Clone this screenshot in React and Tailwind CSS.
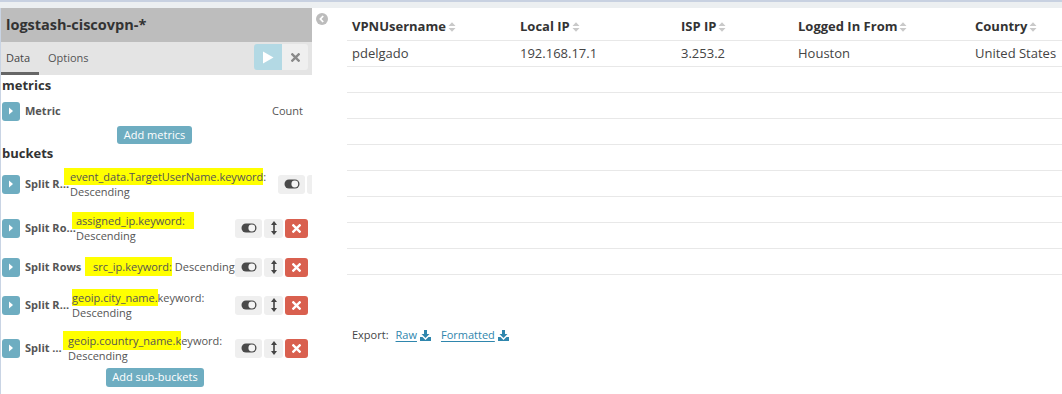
import React from 'react';

const FONT = { fontFamily: '"Open Sans", "Liberation Sans", sans-serif' };

const SortIcon = () => (
  <svg width="8" height="12" viewBox="0 0 8 12" className="ml-[2px] mb-[3px]">
    <path d="M0.5 5 L4 1.2 L7.5 5 Z M0.5 7 L4 10.8 L7.5 7 Z" fill="#c9c9c9" />
  </svg>
);

const Caret = () => (
  <svg width="6" height="8" viewBox="0 0 6 8">
    <path d="M1 0.5 L5 4 L1 7.5 Z" fill="#fff" />
  </svg>
);

const ToggleIcon = () => (
  <svg width="16" height="10" viewBox="0 0 16 10">
    <rect x="0.5" y="0.5" width="15" height="9" rx="4.5" fill="#4a4a4a" />
    <circle cx="10.8" cy="5" r="3.4" fill="#f4f4f4" />
  </svg>
);

const ArrowsIcon = () => (
  <svg width="6" height="14" viewBox="0 0 6 14">
    <path d="M3 0 L6 4 L0 4 Z M3 14 L6 10 L0 10 Z" fill="#444" />
    <rect x="2.2" y="3" width="1.6" height="8" fill="#444" />
  </svg>
);

const CrossIcon = ({ color = '#fff', size = 9 }) => (
  <svg width={size} height={size} viewBox="0 0 10 10">
    <path d="M1.5 1.5 L8.5 8.5 M8.5 1.5 L1.5 8.5" stroke={color} strokeWidth="2.6" strokeLinecap="square" />
  </svg>
);

const DownloadIcon = () => (
  <svg width="11" height="11" viewBox="0 0 11 11" className="ml-[3px]">
    <path d="M4 0 H7 V4 H9.5 L5.5 8 L1.5 4 H4 Z" fill="#2f86ad" />
    <path d="M0 7 H2.5 L5.5 10 L8.5 7 H11 V11 H0 Z" fill="#2f86ad" />
  </svg>
);

function ExpandBtn() {
  return (
    <div className="w-[18px] h-[19px] rounded-[3px] bg-[#6eadc1] flex items-center justify-center shrink-0">
      <Caret />
    </div>
  );
}

function RowActions() {
  return (
    <div className="flex gap-[2px] shrink-0">
      <div className="w-[27px] h-[19px] rounded-[3px] bg-[#efefef] flex items-center justify-center"><ToggleIcon /></div>
      <div className="w-[19px] h-[19px] rounded-[3px] bg-[#efefef] flex items-center justify-center"><ArrowsIcon /></div>
      <div className="w-[23px] h-[19px] rounded-[3px] bg-[#d9604f] flex items-center justify-center"><CrossIcon /></div>
    </div>
  );
}

const HL = ({ children, className = '' }) => (
  <span className={`bg-[#ffff00] ${className}`}>{children}</span>
);

const columns = ['VPNUsername', 'Local IP', 'ISP IP', 'Logged In From', 'Country'];
const row = ['pdelgado', '192.168.17.1', '3.253.2', 'Houston', 'United States'];
const GRID = 'grid grid-cols-[168px_161px_117px_177px_200px]';
const LABEL = 'ml-[5px] shrink-0 text-[11px] font-bold text-[#555] whitespace-nowrap';
const DESC = 'text-[11px] leading-[15px] text-[#555]';

export default function App() {
  return (
    <div className="w-[1062px] h-[394px] bg-white overflow-hidden text-[#444]" style={FONT}>
      <div className="h-[2px] bg-[#c8d1e1]" />
      <div className="h-[6px] bg-[#eceff1]" />
      <div className="flex h-[386px]">
        {/* Editor sidebar */}
        <div className="w-[312px] shrink-0 border-l border-[#c9d4e4] overflow-hidden flex flex-col">
          <div className="h-[34px] bg-[#bdbdbd] flex items-center pl-[5px] text-[14.5px] font-bold text-[#333]">
            logstash-ciscovpn-*
          </div>
          <div className="h-[33px] bg-[#e4e4e4] flex">
            <div className="w-[38px] pl-[5px] flex items-center text-[11px] text-[#444] border-b-[3px] border-[#666] pt-[3px]">Data</div>
            <div className="pl-[9px] flex items-center text-[11px] text-[#555]">Options</div>
            <div className="ml-auto mr-[4px] mt-[2px] h-[26px] flex rounded-[3px] overflow-hidden">
              <div className="w-[28px] bg-[#b3d9e4] flex items-center justify-center">
                <svg width="12" height="13" viewBox="0 0 12 13"><path d="M1 0.5 L11.5 6.5 L1 12.5 Z" fill="#fff" /></svg>
              </div>
              <div className="w-[26px] bg-[#efefef] flex items-center justify-center"><CrossIcon color="#8a8a8a" size={9} /></div>
            </div>
          </div>

          <div className="h-[22px] flex items-center pl-[1px] text-[13px] font-bold text-[#333]">metrics</div>
          <div className="h-[28px] flex items-center pl-[1px] pr-[9px]">
            <ExpandBtn />
            <span className={LABEL}>Metric</span>
            <span className="ml-auto text-[11px] text-[#555]">Count</span>
          </div>
          <div className="h-[18px] mt-[1px] ml-[116px] w-[75px] rounded-[3px] bg-[#6eadc1] text-white text-[11px] flex items-center justify-center">
            Add metrics
          </div>
          <div className="h-[20px] flex items-center pl-[1px] text-[13px] font-bold text-[#333]">buckets</div>

          {/* bucket 1 */}
          <div className="h-[40px] flex items-center pl-[1px]">
            <ExpandBtn />
            <span className={`${LABEL} w-[39px]`}>Split R…</span>
            <div className={`${DESC} w-[214px] shrink-0`}>
              <div className="whitespace-nowrap"><HL className="pl-[6px] py-[1px]">event_data.TargetUserName.keyword</HL>:</div>
              <div className="pl-[6px]">Descending</div>
            </div>
            <RowActions />
          </div>

          {/* bucket 2 */}
          <div className="h-[48px] flex items-center pl-[1px] pr-[4px]">
            <ExpandBtn />
            <span className={`${LABEL} w-[47px]`}>Split Ro…</span>
            <div className={DESC}>
              <div className="whitespace-nowrap"><HL className="pl-[4px] pr-[9px] py-[1px]">assigned_ip.keyword:</HL></div>
              <div className="pl-[4px]">Descending</div>
            </div>
            <div className="ml-auto"><RowActions /></div>
          </div>

          {/* bucket 3 */}
          <div className="h-[30px] flex items-center pl-[1px] pr-[4px]">
            <ExpandBtn />
            <span className={`${LABEL} w-[60px]`}>Split Rows</span>
            <div className="text-[11px] text-[#555] whitespace-nowrap">
              <HL className="pl-[8px] py-[2px]">src_ip.keyword:</HL> Descending
            </div>
            <div className="ml-auto"><RowActions /></div>
          </div>

          {/* bucket 4 */}
          <div className="h-[46px] flex items-center pl-[1px] pr-[4px]">
            <ExpandBtn />
            <span className={`${LABEL} w-[47px]`}>Split R…</span>
            <div className={DESC}>
              <div className="whitespace-nowrap"><HL className="py-[1px]">geoip.city_name.</HL>keyword:</div>
              <div>Descending</div>
            </div>
            <div className="ml-auto"><RowActions /></div>
          </div>

          {/* bucket 5 */}
          <div className="h-[40px] flex items-center pl-[1px] pr-[4px]">
            <ExpandBtn />
            <span className={`${LABEL} w-[38px]`}>Split …</span>
            <div className={DESC}>
              <div className="whitespace-nowrap"><HL className="pl-[5px] py-[2px]">geoip.country_name.k</HL>eyword:</div>
              <div className="pl-[5px]">Descending</div>
            </div>
            <div className="ml-auto"><RowActions /></div>
          </div>

          <div className="h-[19px] ml-[105px] w-[98px] rounded-[3px] bg-[#6eadc1] text-white text-[11px] flex items-center justify-center">
            Add sub-buckets
          </div>
        </div>

        {/* collapse gutter */}
        <div className="w-[35px] shrink-0 pl-[4px] pt-[5px]">
          <svg width="12" height="12" viewBox="0 0 12 12">
            <circle cx="6" cy="6" r="6" fill="#bcbcbc" />
            <path d="M7.2 3 L4.4 6 L7.2 9" stroke="#fff" strokeWidth="1.8" fill="none" />
          </svg>
        </div>

        {/* results */}
        <div className="flex-1 overflow-hidden">
          <div className={`${GRID} h-[33px] border-b border-[#e8e8e8] w-max`}>
            {columns.map(c => (
              <div key={c} className="flex items-end pb-[4px] pl-[5px] text-[13px] font-bold text-[#333] whitespace-nowrap">
                {c}<SortIcon />
              </div>
            ))}
          </div>
          <div className={`${GRID} h-[26px] border-b border-[#e8e8e8] w-max`}>
            {row.map(v => (
              <div key={v} className="flex items-center pl-[5px] text-[13px] text-[#444] whitespace-nowrap">{v}</div>
            ))}
          </div>
          {Array.from({ length: 8 }).map((_, i) => (
            <div key={i} className="h-[26px] border-b border-[#e8e8e8]" />
          ))}
          <div className="mt-[52px] pl-[5px] flex items-center text-[11px] text-[#444]">
            <span>Export:</span>
            <span className="ml-[7px] text-[#2f86ad] underline underline-offset-2 flex items-center">Raw<DownloadIcon /></span>
            <span className="ml-[10px] text-[#2f86ad] underline underline-offset-2 flex items-center">Formatted<DownloadIcon /></span>
          </div>
        </div>
      </div>
    </div>
  );
}
